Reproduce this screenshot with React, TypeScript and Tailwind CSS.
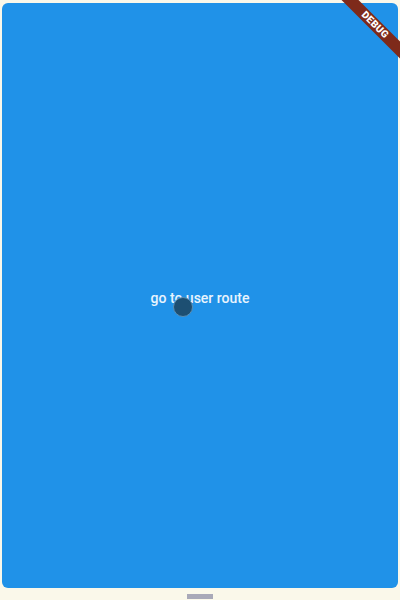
export default function App() {
  return (
    <div
      className="relative h-[600px] w-[400px] overflow-hidden bg-[#faf8ea]"
      style={{ fontFamily: 'Roboto, "Noto Sans", sans-serif' }}
    >
      <div className="mx-[2px] mt-[3px] flex h-[585px] items-center justify-center rounded-md bg-[#2092e8] pt-[4px]">
        <span className="text-[14px] font-medium leading-none text-white/90">go to user route</span>
      </div>

      {/* touch indicator */}
      <div className="absolute left-[173px] top-[297px] h-[20px] w-[20px] rounded-full border border-[#5b8fb3] bg-[#1d4f72]" />

      <div className="mt-[6px] flex justify-center">
        <div className="h-[5px] w-[26px] bg-[#a9a9b8]" />
      </div>

      {/* debug banner */}
      <div className="absolute left-[315px] top-[19px] flex h-[12px] w-[120px] rotate-45 items-center justify-center bg-[#7e2a1a]">
        <span className="text-[10px] font-black leading-none tracking-wide text-white">DEBUG</span>
      </div>
    </div>
  );
}
